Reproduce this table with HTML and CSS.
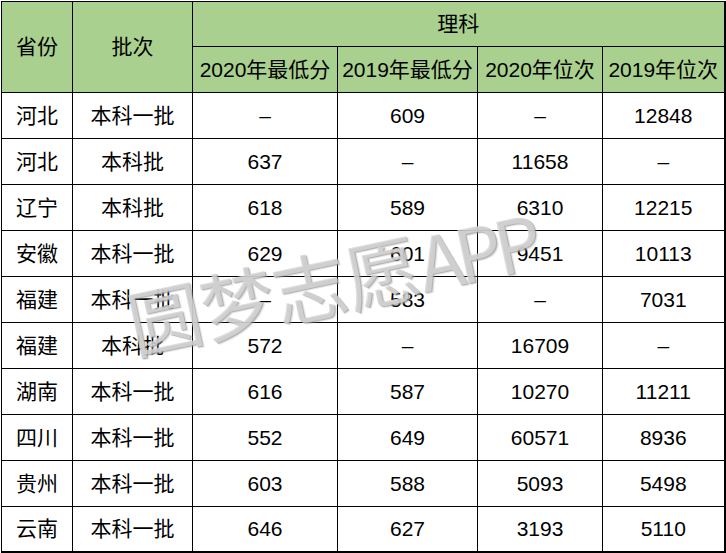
FILE: index.html
```html
<!DOCTYPE html>
<html lang="zh-CN">
<head>
<meta charset="utf-8">
<title>理科分数线</title>
<link rel="stylesheet" href="styles.css">
</head>
<body>
<div class="wrap">
  <table class="score">
    <colgroup>
      <col class="c1"><col class="c2"><col class="c3"><col class="c4"><col class="c5"><col class="c6">
    </colgroup>
    <thead>
      <tr class="top">
        <th rowspan="2">省份</th>
        <th rowspan="2">批次</th>
        <th colspan="4">理科</th>
      </tr>
      <tr>
        <th>2020年最低分</th>
        <th>2019年最低分</th>
        <th>2020年位次</th>
        <th>2019年位次</th>
      </tr>
    </thead>
    <tbody>
      <tr><td>河北</td><td>本科一批</td><td>–</td><td>609</td><td>–</td><td>12848</td></tr>
      <tr><td>河北</td><td>本科批</td><td>637</td><td>–</td><td>11658</td><td>–</td></tr>
      <tr><td>辽宁</td><td>本科批</td><td>618</td><td>589</td><td>6310</td><td>12215</td></tr>
      <tr><td>安徽</td><td>本科一批</td><td>629</td><td>601</td><td>9451</td><td>10113</td></tr>
      <tr><td>福建</td><td>本科一批</td><td>–</td><td>583</td><td>–</td><td>7031</td></tr>
      <tr><td>福建</td><td>本科批</td><td>572</td><td>–</td><td>16709</td><td>–</td></tr>
      <tr><td>湖南</td><td>本科一批</td><td>616</td><td>587</td><td>10270</td><td>11211</td></tr>
      <tr><td>四川</td><td>本科一批</td><td>552</td><td>649</td><td>60571</td><td>8936</td></tr>
      <tr><td>贵州</td><td>本科一批</td><td>603</td><td>588</td><td>5093</td><td>5498</td></tr>
      <tr class="last"><td>云南</td><td>本科一批</td><td>646</td><td>627</td><td>3193</td><td>5110</td></tr>
    </tbody>
  </table>
  <div class="watermark">圆梦志愿<span class="wm-latin">APP</span></div>
</div>
</body>
</html>
```

FILE: styles.css
```css
html, body {
  margin: 0;
  padding: 0;
  background: #ffffff;
}

.wrap {
  position: relative;
  width: 726px;
  height: 553px;
  padding: 0 0 0 1px;
  box-sizing: border-box;
  overflow: hidden;
}

.score {
  border-collapse: collapse;
  table-layout: fixed;
  width: 724px;
  margin-top: 1px;
  font-family: "Liberation Sans", "Noto Sans CJK SC", sans-serif;
  font-size: 21px;
  line-height: 24px;
  color: #000;
  border-right: 2px solid #000;
  border-bottom: 2px solid #000;
}

.c1 { width: 71px; }
.c2 { width: 120px; }
.c3 { width: 145px; }
.c4 { width: 140px; }
.c5 { width: 125px; }
.c6 { width: 122px; }

.score tr {
  height: 46px;
}

.score th,
.score td {
  border: 1px solid #000;
  height: 44px;
  padding: 0;
  text-align: center;
  vertical-align: middle;
  font-weight: normal;
  white-space: nowrap;
}

.score tr.top {
  height: 45px;
}

.score tr.last {
  height: 45px;
}

.score th {
  background: #a9d08e;
}

.watermark {
  position: absolute;
  left: 128px;
  top: 286px;
  font-family: "Noto Sans CJK SC", "Liberation Sans", sans-serif;
  font-size: 74px;
  line-height: 1;
  color: rgba(214, 214, 214, 0.8);
  text-shadow: 1px 1px 0 rgba(140, 140, 140, 0.55), 2px 2px 1px rgba(170, 170, 170, 0.35);
  transform: rotate(-12deg);
  transform-origin: left center;
  white-space: nowrap;
  pointer-events: none;
}

.wm-latin {
  letter-spacing: -7px;
}
```
